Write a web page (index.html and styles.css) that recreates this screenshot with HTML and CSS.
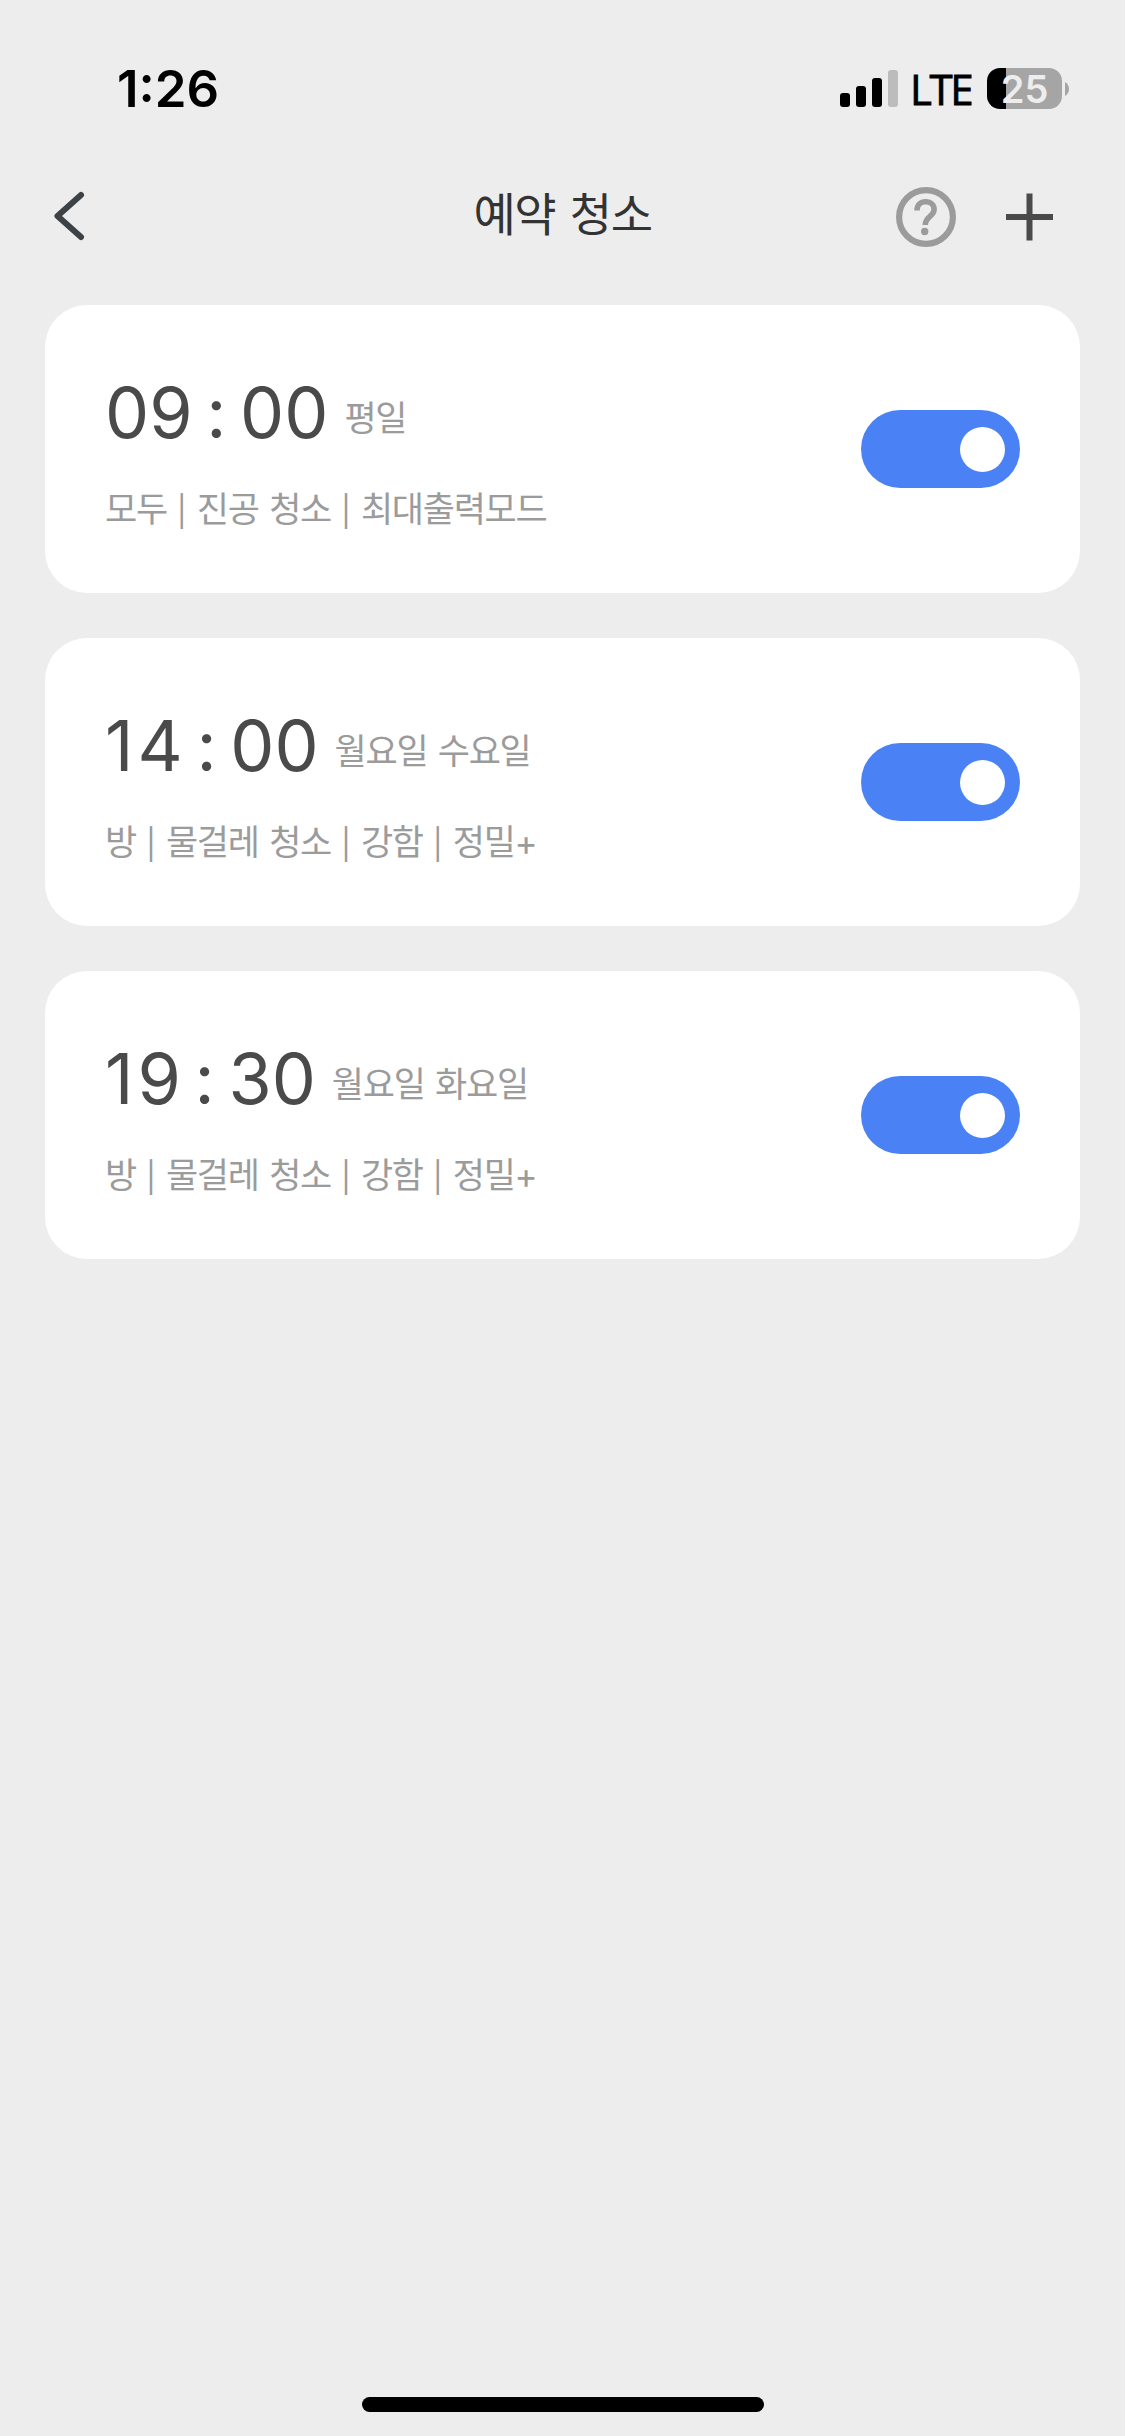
FILE: index.html
```
<!DOCTYPE html>
<html lang="ko">
<head>
    <meta charset="UTF-8">
    <meta name="viewport" content="width=device-width, initial-scale=1.0">
    <title>예약 청소</title>
    <link rel="stylesheet" href="styles.css">
</head>
<body>

    <!-- Status bar -->
    <div class="status-bar">
        <span class="clock">1:26</span>
        <div class="status-icons">
            <svg class="signal" width="58" height="38" viewBox="0 0 58 38">
                <rect x="0" y="23" width="10" height="14" rx="3"/>
                <rect x="16" y="16" width="10" height="21" rx="3"/>
                <rect x="32" y="8" width="10" height="29" rx="3"/>
                <rect x="48" y="0" width="10" height="37" rx="3" fill="#bcbcbc"/>
            </svg>
            <span class="network">LTE</span>
            <div class="battery"><span>25</span></div>
            <svg class="battery-cap" width="4" height="14" viewBox="0 0 4 14">
                <path d="M0 0C5.3 2.5 5.3 11.500 0 14Z" fill="#a5a5a5"/>
            </svg>
        </div>
    </div>

    <!-- Title bar -->
    <header class="header">
        <svg class="back" width="40" height="60" viewBox="0 0 40 60">
            <path d="M31 8L7.500 29L31 50" fill="none" stroke="#3c4246" stroke-width="6" stroke-linecap="round" stroke-linejoin="round"/>
        </svg>
        <h1>예약 청소</h1>
        <div class="actions">
            <svg width="60" height="60" viewBox="0 0 60 60">
                <circle cx="30" cy="30" r="26.900" fill="none" stroke="#9b9b9b" stroke-width="6.200"/>
                <path d="M21 23.500C21 18 24.500 14.800 29.700 14.800C35 14.800 38.100 18.200 38.100 22.500C38.100 29.500 29.200 29.500 29.200 38" fill="none" stroke="#9b9b9b" stroke-width="5.600"/>
                <circle cx="28.700" cy="44.500" r="3.700" fill="#9b9b9b"/>
            </svg>
            <svg width="48" height="60" viewBox="0 0 48 60">
                <path d="M23.500 6.500V53.500M0 30H47" stroke="#4a4a4a" stroke-width="6"/>
            </svg>
        </div>
    </header>

    <!-- Schedule list -->
    <main class="list">
        <div class="card">
            <div class="info">
                <div class="when"><span class="time">09 : 00</span><span class="days">평일</span></div>
                <div class="detail">모두<i>|</i>진공 청소<i>|</i>최대출력모드</div>
            </div>
            <div class="toggle"></div>
        </div>
        <div class="card">
            <div class="info">
                <div class="when"><span class="time"><span class="one">1</span>4 : 00</span><span class="days">월요일 수요일</span></div>
                <div class="detail">방<i>|</i>물걸레 청소<i>|</i>강함<i>|</i>정밀+</div>
            </div>
            <div class="toggle"></div>
        </div>
        <div class="card">
            <div class="info">
                <div class="when"><span class="time"><span class="one">1</span>9 : 30</span><span class="days">월요일 화요일</span></div>
                <div class="detail">방<i>|</i>물걸레 청소<i>|</i>강함<i>|</i>정밀+</div>
            </div>
            <div class="toggle"></div>
        </div>
    </main>

    <div class="home-bar"></div>

</body>
</html>
```
FILE: styles.css
```
* {
    box-sizing: border-box;
}
body {
    margin: 0;
    height: 2436px;
    display: flex;
    flex-direction: column;
    background-color: #ededed;
    font-family: Inter, "Noto Sans CJK KR", sans-serif;
}
svg {
    display: block;
}
.status-bar {
    height: 132px;
    padding: 45px 56px 0 117px;
    display: flex;
    justify-content: space-between;
    align-items: flex-start;
}
.clock {
    font-size: 51px;
    font-weight: 600;
    line-height: 87px;
}
.status-icons {
    display: flex;
    align-items: center;
    height: 87px;
}
.signal {
    margin-right: 12px;
}
.network {
    font-family: "Open Sans", sans-serif;
    font-size: 42px;
    letter-spacing: -2.4px;
    line-height: 60px;
    width: 77px;
    -webkit-text-stroke: 0.8px #000;
}
.battery {
    width: 75px;
    height: 41px;
    border-radius: 13px;
    background: linear-gradient(to right, #000 19px, #a5a5a5 19px);
    color: #ededed;
    font-size: 38px;
    font-weight: 600;
    line-height: 42px;
    text-align: center;
}
.battery-cap {
    margin-left: 3px;
}
.header {
    height: 173px;
    padding: 55px 50px 0;
    display: grid;
    grid-template-columns: 1fr auto 1fr;
    align-items: start;
}
.header h1 {
    margin: 0;
    font-size: 46px;
    font-weight: 400;
    letter-spacing: -1.4px;
    word-spacing: 3px;
    line-height: 55px;
    color: #333;
}
.actions {
    display: flex;
    justify-content: flex-end;
    gap: 50px;
    margin-right: 21px;
}
.list {
    padding: 0 45px;
    display: flex;
    flex-direction: column;
    gap: 45px;
}
.card {
    height: 288px;
    padding: 0 60px;
    display: flex;
    justify-content: space-between;
    align-items: center;
    background-color: #fff;
    border-radius: 42px;
}
.info {
    padding-top: 9px;
}
.when {
    display: flex;
    height: 86px;
    line-height: 86px;
}
.time {
    font-size: 70px;
    font-kerning: none;
    font-feature-settings: "calt" 0; /* keep the colon on the baseline */
    word-spacing: -6px;
    color: #4a4a4a;
    white-space: pre;
}
.one {
    letter-spacing: 4px;
}
.days {
    margin-left: 16px;
    line-height: 97px;
}
.days, .detail {
    font-size: 35px;
    letter-spacing: -1.3px;
    word-spacing: 2px;
    color: #9b9b9b;
}
.detail {
    margin-top: 26px;
    line-height: 54px;
}
/* separator between options */
.detail i {
    display: inline-block;
    width: 30px;
    font-size: 30px;
    font-style: normal;
    letter-spacing: 0;
    text-align: center;
}
.toggle {
    width: 159px;
    height: 78px;
    padding: 17px 15px;
    border-radius: 39px;
    background-color: #4a82f6;
}
.toggle::after {
    content: "";
    display: block;
    width: 45px;
    height: 45px;
    margin-left: auto;
    border-radius: 50%;
    background-color: #fff;
}
.home-bar {
    width: 402px;
    height: 15px;
    margin: auto auto 24px;
    border-radius: 8px;
    background-color: #000;
}
```
